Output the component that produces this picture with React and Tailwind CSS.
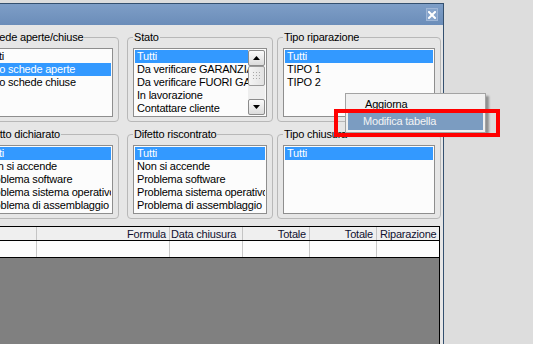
import React from 'react';

const groupsTop = [
  { title: 'Schede aperte/chiuse', w: 'w-[145px]', items: ['Tutti', 'Solo schede aperte', 'Solo schede chiuse'], selected: 1 },
  { title: 'Stato', w: 'w-[146px] ml-[8px]', items: ['Tutti', 'Da verificare GARANZIA', 'Da verificare FUORI GARANZIA', 'In lavorazione', 'Contattare cliente', 'Pronto'], selected: 0, scroll: true },
  { title: 'Tipo riparazione', w: 'w-[164px] ml-[4px]', items: ['Tutti', 'TIPO 1', 'TIPO 2'], selected: 0 },
];

const difetti = ['Tutti', 'Non si accende', 'Problema software', 'Problema sistema operativo', 'Problema di assemblaggio'];

const groupsBottom = [
  { title: 'Difetto dichiarato', w: 'w-[145px]', items: difetti, selected: 0 },
  { title: 'Difetto riscontrato', w: 'w-[146px] ml-[8px]', items: difetti, selected: 0 },
  { title: 'Tipo chiusura', w: 'w-[164px] ml-[4px]', items: ['Tutti'], selected: 0 },
];

const columns = [
  { label: '', w: 'w-[62px]', align: 'text-right' },
  { label: 'Formula', w: 'w-[133px]', align: 'text-right pr-[3px]' },
  { label: 'Data chiusura', w: 'w-[73px]', align: 'text-left pl-[1px]' },
  { label: 'Totale', w: 'w-[67px]', align: 'text-right pr-[3px]' },
  { label: 'Totale', w: 'w-[67px]', align: 'text-right pr-[3px]' },
  { label: 'Riparazione', w: 'flex-1', align: 'text-left pl-[3px]' },
];

function ScrollButton({ up }) {
  return (
    <div className="h-[16px] shrink-0 rounded-[2px] border border-[#8b8b8b] bg-gradient-to-b from-[#fbfbfb] to-[#dcdcdc] flex items-center justify-center">
      <svg width="7" height="4" viewBox="0 0 7 4">
        {up ? <path d="M0 4 L3.5 0 L7 4 Z" fill="#000" /> : <path d="M0 0 L3.5 4 L7 0 Z" fill="#000" />}
      </svg>
    </div>
  );
}

function ScrollBar() {
  return (
    <div className="w-[17px] shrink-0 flex flex-col bg-[#eeeeee]">
      <ScrollButton up />
      <div className="h-[20px] shrink-0 rounded-[2px] border border-[#9a9a9a] bg-gradient-to-r from-[#f4f4f4] to-[#e2e2e2] flex items-center justify-center">
        <svg width="7" height="9" viewBox="0 0 7 9">
          {[0, 3, 6].map((y) => [0, 3, 6].map((x) => (
            <rect key={`${x}-${y}`} x={x} y={y} width="1" height="1" fill="#a8a8a8" />
          )))}
        </svg>
      </div>
      <div className="flex-1" />
      <ScrollButton />
    </div>
  );
}

function ListBox({ items, selected, scroll }) {
  return (
    <div className="mt-[5px] h-[69px] border border-[#8e8e8e] bg-[#fcfcfc] p-[1px] flex overflow-hidden">
      <div className="flex-1 min-w-0 overflow-hidden">
        {items.map((it, i) => (
          <div key={i} className={`h-[13px] leading-[13px] pl-[2px] whitespace-nowrap ${i === selected ? 'bg-[#3399ff] text-white' : 'text-black'}`}>
            {it}
          </div>
        ))}
      </div>
      {scroll && <ScrollBar />}
    </div>
  );
}

function Group({ g }) {
  return (
    <fieldset className={`${g.w} min-w-0 shrink-0 border border-[#b8b8b8] rounded-[4px] px-[5px] pb-[4px]`}>
      <legend className="px-[1px] leading-[12px] text-black whitespace-nowrap">{g.title}</legend>
      <ListBox items={g.items} selected={g.selected} scroll={g.scroll} />
    </fieldset>
  );
}

export default function App() {
  return (
    <div className="w-[533px] h-[344px] overflow-hidden bg-[#dddddd] pt-[3px] relative text-[11px] tracking-[-0.2px] font-['Liberation_Sans',Arial,sans-serif]">
      <div className="-ml-[30px] w-[474px] h-[360px] border-t border-r border-[#34506f] bg-[#e6e6e6] flex flex-col">
        {/* title bar */}
        <div className="h-[21px] shrink-0 bg-gradient-to-b from-[#7e9ec7] to-[#6b8db9] flex items-center justify-end pr-[5px]">
          <div className="w-[12px] h-[13px] border border-[#9fb6d6] bg-[#86a4cb] flex items-center justify-center">
            <svg width="8" height="8" viewBox="0 0 8 8">
              <path d="M1 1 L7 7 M7 1 L1 7" stroke="#fff" strokeWidth="2" strokeLinecap="square" />
            </svg>
          </div>
        </div>

        {/* body */}
        <div className="flex-1 flex flex-col pl-[4px] pt-[6px]">
          <div className="flex">
            {groupsTop.map((g) => <Group key={g.title} g={g} />)}
          </div>
          <div className="flex mt-[6px]">
            {groupsBottom.map((g) => <Group key={g.title} g={g} />)}
          </div>

          {/* table */}
          <div className="mt-[7px] w-[466px] flex-1 flex flex-col border-l border-r border-t border-black bg-[#808080]">
            <div className="h-[14px] flex bg-[#efefef] border-b border-black leading-[14px] text-[#101030]">
              {columns.map((c, i) => (
                <div key={i} className={`${c.w} ${c.align} shrink-0 whitespace-nowrap overflow-hidden ${i < columns.length - 1 ? 'border-r border-[#c4c4c4]' : ''}`}>
                  {c.label}
                </div>
              ))}
            </div>
            <div className="h-[17px] flex bg-[#fcfcfc] border-b border-black">
              {columns.map((c, i) => (
                <div key={i} className={`${c.w} shrink-0 ${i < columns.length - 1 ? 'border-r border-[#c8c8c8]' : ''}`} />
              ))}
            </div>
          </div>
        </div>
      </div>

      {/* context menu */}
      <div className="absolute left-[345px] top-[93px] w-[141px] h-[40px] border border-[#a3a3a3] bg-[#f0f0f0] shadow-[3px_3px_2px_rgba(0,0,0,0.35)] px-[2px] pt-[1px]">
        <div className="h-[18px] leading-[18px] pl-[17px] text-black">Aggiorna</div>
        <div className="h-[17px] leading-[17px] pl-[15px] bg-[#7b9cc1] text-[#f4f4f4]">Modifica tabella</div>
      </div>

      {/* highlight box */}
      <div className="absolute left-[334px] top-[109px] w-[166px] h-[28px] border-[4px] border-[#ff0000]" />
    </div>
  );
}
